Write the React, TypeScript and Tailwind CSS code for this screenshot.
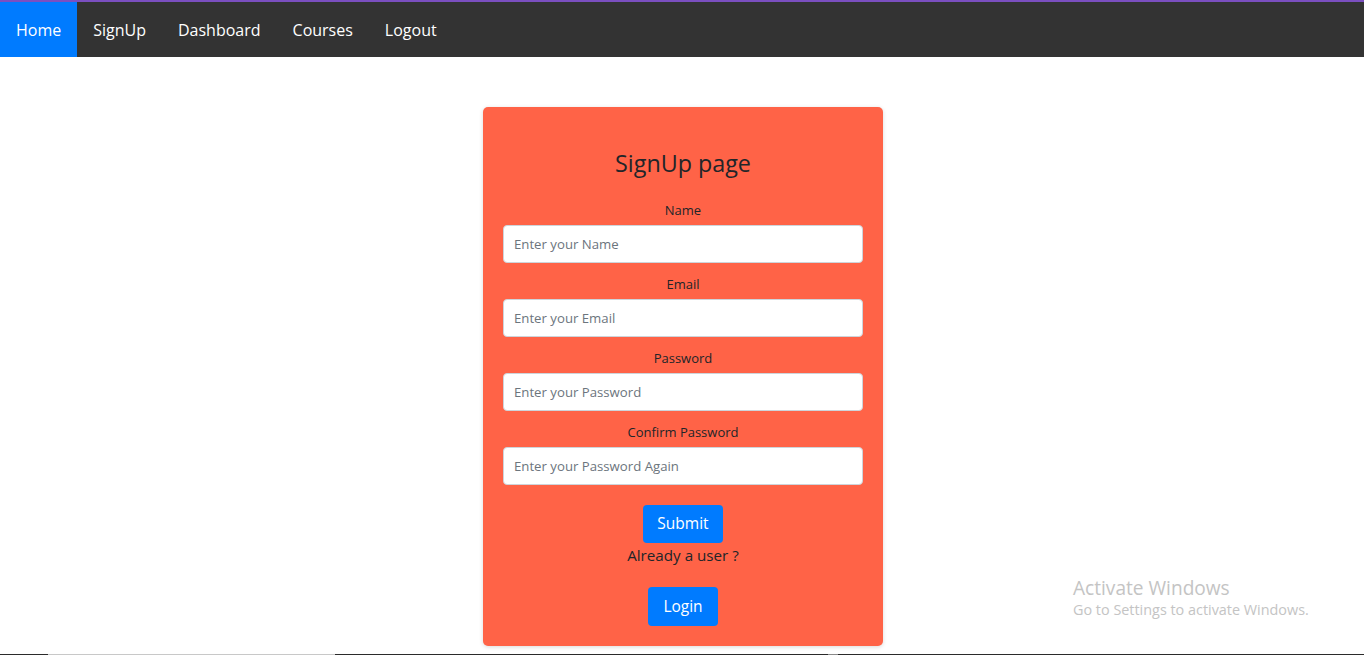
import React from "react";

const font = { fontFamily: '"Open Sans", "Noto Sans", sans-serif' };

function Field({ label, placeholder, type }: { label: string; placeholder: string; type: string }) {
  return (
    <div className="flex flex-col items-center mb-[13px]">
      <label className="text-[13px] leading-[17px] text-[#212529] mb-[6px]">{label}</label>
      <input
        type={type}
        placeholder={placeholder}
        className="w-full h-[38px] bg-white rounded-[4px] border border-[#ced4da] px-[10px] text-[13.2px] text-[#495057] placeholder:text-[#6c757d] outline-none"
      />
    </div>
  );
}

export default function App() {
  return (
    <div className="w-[1364px] h-[655px] bg-white flex flex-col relative overflow-hidden" style={font}>
      <div className="h-[2px] bg-[#7b4fc0]" />
      <nav className="h-[55px] bg-[#333333] flex items-stretch">
        {["Home", "SignUp", "Dashboard", "Courses", "Logout"].map((t, i) => (
          <a
            key={t}
            className={`px-[16px] flex items-center text-[16px] text-white ${i === 0 ? "bg-[#007bff]" : ""}`}
          >
            {t}
          </a>
        ))}
      </nav>
      <div className="flex justify-center pt-[50px] pl-[2px]">
        <div className="w-[400px] bg-[#ff6347] rounded-[5px] shadow-[0_1px_4px_rgba(0,0,0,0.15)] px-[20px] pt-[40px] pb-[20px] flex flex-col">
          <h2 className="text-center text-[23.3px] leading-[32px] text-[#212529] mb-[23px]">SignUp page</h2>
          <Field label="Name" placeholder="Enter your Name" type="text" />
          <Field label="Email" placeholder="Enter your Email" type="email" />
          <Field label="Password" placeholder="Enter your Password" type="password" />
          <Field label="Confirm Password" placeholder="Enter your Password Again" type="password" />
          <div className="flex flex-col items-center mt-[7px]">
            <button className="w-[80px] h-[38px] bg-[#007bff] text-white text-[15.5px] rounded-[4px]">Submit</button>
            <p className="text-[15.2px] leading-[24px] text-[#212529] mt-[0px]">Already a user ?</p>
            <button className="w-[70px] h-[39px] bg-[#007bff] text-white text-[15.5px] rounded-[4px] mt-[20px]">Login</button>
          </div>
        </div>
      </div>
      <div className="absolute left-[1073px] top-[576px] text-[#c4c4c4]">
        <div className="text-[19.1px] leading-[24px]">Activate Windows</div>
        <div className="text-[14.4px] leading-[20px]">Go to Settings to activate Windows.</div>
      </div>
      <div className="absolute left-0 bottom-0 w-full h-[1px] bg-[#2b2b2b] flex">
        <div className="ml-[48px] w-[287px] h-[1px] bg-[#c8c8c8]" />
        <div className="ml-[493px] w-[10px] h-[1px] bg-[#8a8a8a]" />
      </div>
    </div>
  );
}
